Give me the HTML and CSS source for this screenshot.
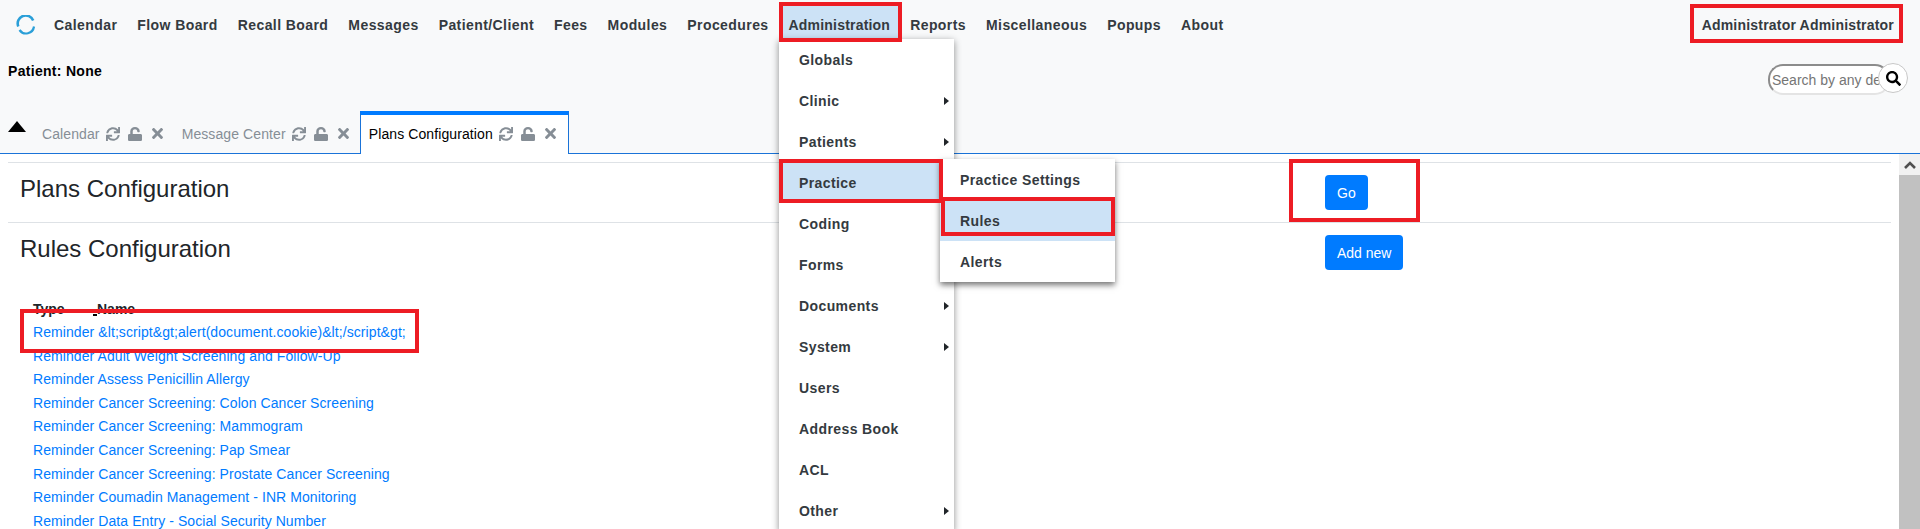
FILE: index.html
```html
<!DOCTYPE html>
<html lang="en">
<head>
  <meta charset="UTF-8">
  <meta name="viewport" content="width=device-width, initial-scale=1.0">
  <title>Plans Configuration</title>
  <link rel="stylesheet" href="styles.css">
</head>
<body>
  <svg class="icon-defs" aria-hidden="true">
    <symbol id="i-sync" viewBox="0 0 512 512"><path d="M440.65 12.57l4 82.77A247.16 247.16 0 0 0 255.83 8C134.73 8 33.91 94.92 12.29 209.82A12 12 0 0 0 24.09 224h49.05a12 12 0 0 0 11.67-9.26 175.91 175.91 0 0 1 317-56.94l-101.46-4.86a12 12 0 0 0-12.57 12v47.41a12 12 0 0 0 12 12H500a12 12 0 0 0 12-12V12a12 12 0 0 0-12-12h-47.37a12 12 0 0 0-11.98 12.57zM255.83 432a175.61 175.61 0 0 1-146-77.8l101.8 4.87a12 12 0 0 0 12.57-12v-47.4a12 12 0 0 0-12-12H12a12 12 0 0 0-12 12V500a12 12 0 0 0 12 12h47.35a12 12 0 0 0 12-12.6l-4.15-82.57A247.17 247.17 0 0 0 255.83 504c121.11 0 221.93-86.92 243.55-201.82a12 12 0 0 0-11.8-14.18h-49.05a12 12 0 0 0-11.67 9.26A175.86 175.86 0 0 1 255.83 432z"/></symbol>
    <symbol id="i-unlock" viewBox="0 0 448 512" preserveAspectRatio="none"><path d="M400 256H152V152.9c0-39.6 31.7-72.5 71.3-72.9 40-.4 72.7 32.1 72.7 72v16c0 13.3 10.7 24 24 24h32c13.3 0 24-10.7 24-24v-16C376 68 307.5-.3 223.5 0 139.5.3 72 69.5 72 153.5V256H48c-26.5 0-48 21.5-48 48v160c0 26.5 21.5 48 48 48h352c26.5 0 48-21.5 48-48V304c0-26.5-21.5-48-48-48z"/></symbol>
    <symbol id="i-times" viewBox="0 80 352 352"><path d="M242.72 256l100.07-100.07c12.28-12.28 12.28-32.19 0-44.48l-22.24-22.24c-12.28-12.28-32.19-12.28-44.48 0L176 189.28 75.93 89.21c-12.28-12.28-32.19-12.28-44.48 0L9.21 111.45c-12.28 12.28-12.28 32.19 0 44.48L109.28 256 9.21 356.07c-12.28 12.28-12.28 32.19 0 44.48l22.24 22.24c12.28 12.28 32.2 12.28 44.48 0L176 322.72l100.07 100.07c12.28 12.28 32.2 12.28 44.48 0l22.24-22.24c12.28-12.28 12.28-32.19 0-44.48L242.72 256z"/></symbol>
  </svg>

  <header class="topbar">
    <nav class="nav-row">
      <svg class="logo" viewBox="0 0 20 20" width="20" height="20">
        <path d="M2.3 11.5A8 8 0 0 1 17.2 5.5" fill="none" stroke="#2a9fd8" stroke-width="2.6"/>
        <path d="M18 11.5A8 8 0 0 1 3.5 15" fill="none" stroke="#2a9fd8" stroke-width="2.2"/>
      </svg>
      <a class="nav-item">Calendar</a>
      <a class="nav-item">Flow Board</a>
      <a class="nav-item">Recall Board</a>
      <a class="nav-item">Messages</a>
      <a class="nav-item">Patient/Client</a>
      <a class="nav-item">Fees</a>
      <a class="nav-item">Modules</a>
      <a class="nav-item">Procedures</a>
      <a class="nav-item active">Administration</a>
      <a class="nav-item">Reports</a>
      <a class="nav-item">Miscellaneous</a>
      <a class="nav-item">Popups</a>
      <a class="nav-item">About</a>
      <a class="nav-item nav-user">Administrator Administrator</a>
    </nav>

    <div class="patient-row">
      <div class="patient-name">Patient: None</div>
      <div class="search-box">
        <input class="search-input" type="text" placeholder="Search by any demographics">
        <button class="search-button" type="button">
          <svg viewBox="0 0 512 512" width="15" height="15"><path d="M505 442.7L405.3 343c-4.5-4.5-10.6-7-17-7H372c27.6-35.3 44-79.7 44-128C416 93.1 322.9 0 208 0S0 93.1 0 208s93.1 208 208 208c48.3 0 92.7-16.4 128-44v16.3c0 6.4 2.5 12.5 7 17l99.7 99.7c9.4 9.4 24.6 9.4 33.9 0l28.3-28.3c9.4-9.4 9.4-24.6.1-34zM208 336c-70.7 0-128-57.2-128-128 0-70.7 57.2-128 128-128 70.7 0 128 57.2 128 128 0 70.7-57.2 128-128 128z"/></svg>
        </button>
      </div>
    </div>

    <div class="tab-row">
      <span class="tab-toggle"></span>
      <div class="tab">
        <span>Calendar</span>
        <svg class="tab-icon sync"><use href="#i-sync"/></svg>
        <svg class="tab-icon lock"><use href="#i-unlock"/></svg>
        <svg class="tab-icon close"><use href="#i-times"/></svg>
      </div>
      <div class="tab">
        <span>Message Center</span>
        <svg class="tab-icon sync"><use href="#i-sync"/></svg>
        <svg class="tab-icon lock"><use href="#i-unlock"/></svg>
        <svg class="tab-icon close"><use href="#i-times"/></svg>
      </div>
      <div class="tab tab-active">
        <span>Plans Configuration</span>
        <svg class="tab-icon sync"><use href="#i-sync"/></svg>
        <svg class="tab-icon lock"><use href="#i-unlock"/></svg>
        <svg class="tab-icon close"><use href="#i-times"/></svg>
      </div>
    </div>
  </header>

  <main class="main-area">
    <div class="content">
      <section class="config-section">
        <div>
          <h2>Plans Configuration</h2>
        </div>
        <div><button class="btn" type="button">Go</button></div>
      </section>

      <section class="config-section">
        <div>
          <h2>Rules Configuration</h2>
          <div class="rules-head">
            <span class="col-type">Type</span>
            <span class="col-name">Name</span>
          </div>
          <ul class="rules-list">
            <li><a>Reminder &amp;lt;script&amp;gt;alert(document.cookie)&amp;lt;/script&amp;gt;</a></li>
            <li><a>Reminder Adult Weight Screening and Follow-Up</a></li>
            <li><a>Reminder Assess Penicillin Allergy</a></li>
            <li><a>Reminder Cancer Screening: Colon Cancer Screening</a></li>
            <li><a>Reminder Cancer Screening: Mammogram</a></li>
            <li><a>Reminder Cancer Screening: Pap Smear</a></li>
            <li><a>Reminder Cancer Screening: Prostate Cancer Screening</a></li>
            <li><a>Reminder Coumadin Management - INR Monitoring</a></li>
            <li><a>Reminder Data Entry - Social Security Number</a></li>
          </ul>
        </div>
        <div><button class="btn" type="button">Add new</button></div>
      </section>
    </div>

    <div class="scrollbar">
      <div class="scroll-arrow">
        <svg viewBox="0 0 12 8" width="12" height="8"><path d="M1 7l5-5 5 5" fill="none" stroke="#505050" stroke-width="2.6"/></svg>
      </div>
      <div class="scroll-thumb"></div>
    </div>
  </main>

  <!-- open dropdowns -->
  <ul class="menu menu-admin">
    <li>Globals</li>
    <li class="has-sub">Clinic</li>
    <li class="has-sub">Patients</li>
    <li class="selected">Practice</li>
    <li>Coding</li>
    <li>Forms</li>
    <li class="has-sub">Documents</li>
    <li class="has-sub">System</li>
    <li>Users</li>
    <li>Address Book</li>
    <li>ACL</li>
    <li class="has-sub">Other</li>
  </ul>
  <ul class="menu menu-practice">
    <li>Practice Settings</li>
    <li class="selected">Rules</li>
    <li>Alerts</li>
  </ul>

  <!-- red boxes drawn on the screenshot -->
  <div class="mark mark-admin"></div>
  <div class="mark mark-user"></div>
  <div class="mark mark-practice"></div>
  <div class="mark mark-rules"></div>
  <div class="mark mark-go"></div>
  <div class="mark mark-link"></div>
</body>
</html>
```

FILE: styles.css
```css
* {
  box-sizing: border-box;
}

html, body {
  height: 529px;
  overflow: hidden;
}

body {
  position: relative;
  margin: 0;
  font-family: "Liberation Sans", Arial, sans-serif;
  font-size: 14px;
  color: #212529;
  background-color: #fff;
}

.icon-defs {
  display: none;
}

/* Top area */
.topbar {
  display: flex;
  flex-direction: column;
  height: 154px;
  background-color: #f8f9fa;
  border-bottom: 1px solid #1a73d8;
}

.nav-row {
  display: flex;
  align-items: center;
  height: 40px;
  margin-top: 5px;
  padding: 0 16px;
}

.logo {
  margin-right: 8px;
}

.nav-item {
  padding: 0 10px;
  line-height: 40px;
  font-weight: bold;
  letter-spacing: 0.42px;
  color: #343a40;
  white-space: nowrap;
}

.nav-item.active {
  letter-spacing: 0.2px;
  background-color: #cce2f6;
}

.nav-user {
  margin-left: auto;
  letter-spacing: 0.2px;
}

.patient-row {
  display: flex;
  justify-content: space-between;
  margin-top: 15px;
  padding: 0 30px 0 8px;
}

.patient-name {
  line-height: 22px;
  font-weight: bold;
  letter-spacing: 0.3px;
  color: #000;
}

.search-box {
  position: relative;
  margin-top: 4px;
}

.search-input {
  display: block;
  width: 122px;
  height: 31px;
  padding: 0 2px;
  font-family: inherit;
  font-size: 14px;
  background-color: #fff;
  border: 2px solid;
  border-color: #8c8c8c #e4e4e4 #e4e4e4 #8c8c8c;
  border-radius: 15px;
}

.search-button {
  position: absolute;
  top: -1px;
  left: 110px;
  display: flex;
  align-items: center;
  justify-content: center;
  width: 30px;
  height: 30px;
  padding: 0;
  background-color: #fff;
  border: 1px solid #c8c8c8;
  border-radius: 50%;
}

.tab-row {
  display: flex;
  align-items: flex-end;
  margin-top: auto;
  margin-bottom: -1px;
  padding-left: 8px;
}

.tab-toggle {
  width: 0;
  height: 0;
  margin: 0 6px 22px 0;
  border-left: 9.5px solid transparent;
  border-right: 9.5px solid transparent;
  border-bottom: 11px solid #000;
}

.tab {
  display: flex;
  align-items: center;
  height: 43px;
  padding: 0 9px 2px 10px;
  color: #868e96;
  letter-spacing: 0.1px;
  border-top: 4px solid transparent;
}

.tab-active {
  margin-left: 2px;
  padding: 0 12px 2px 8px;
  color: #000;
  background-color: #fff;
  border: 1px solid #1a73d8;
  border-top: 4px solid #007bff;
  border-bottom: 0;
}

.tab-icon {
  fill: #868e96;
  width: 14px;
  height: 14px;
}

.tab-icon.sync {
  margin-left: 6px;
}

.tab-icon.lock {
  margin-left: 8px;
}

.tab-icon.close {
  width: 11px;
  height: 11px;
  margin-left: 10px;
}

/* Page body */
.main-area {
  display: flex;
  height: 375px;
  overflow: hidden;
}

.content {
  flex: 1;
  padding: 8px 8px 0;
}

.config-section {
  display: grid;
  grid-template-columns: 1305px auto;
  padding: 12px 0 12px 12px;
  border-top: 1px solid #dee2e6;
}

h2 {
  margin: -1px 0 0;
  font-size: 24px;
  font-weight: 400;
  line-height: 29px;
  color: #212529;
}

.btn {
  display: block;
  height: 35px;
  padding: 0 12px;
  font-family: inherit;
  font-size: 14px;
  color: #fff;
  background-color: #007bff;
  border: 0;
  border-radius: 4px;
}

.rules-head {
  display: flex;
  margin: 35px 0 0 13px;
  line-height: 22px;
  font-weight: bold;
  color: #212529;
}

.col-type {
  width: 64px;
}

.col-name {
  position: relative;
}

/* stray mark left under the header in the original */
.col-name::before {
  content: "";
  position: absolute;
  left: -4px;
  top: 16px;
  width: 4px;
  height: 2px;
  background-color: #000;
}

.rules-list {
  margin: 1px 0 0 13px;
  padding: 0;
  list-style: none;
}

.rules-list li {
  line-height: 23.6px;
  letter-spacing: 0.08px;
}

.rules-list a {
  color: #007bff;
}

.scrollbar {
  display: flex;
  flex-direction: column;
  width: 21px;
  background-color: #f1f1f1;
}

.scroll-arrow {
  display: flex;
  align-items: center;
  justify-content: center;
  height: 21px;
}

.scroll-thumb {
  flex: 1;
  background-color: #c1c1c1;
}

/* Dropdowns */
.menu {
  position: absolute;
  margin: 0;
  padding: 0;
  list-style: none;
  background-color: #fff;
  box-shadow: 0 2px 7px rgba(0, 0, 0, 0.45);
}

.menu-admin {
  left: 779px;
  top: 39px;
  width: 175px;
}

.menu-practice {
  left: 940px;
  top: 159px;
  width: 175px;
  box-shadow: 0 3px 6px rgba(0, 0, 0, 0.55);
}

.menu li {
  position: relative;
  height: 41px;
  padding-left: 20px;
  line-height: 43px;
  font-weight: bold;
  letter-spacing: 0.4px;
  color: #343a40;
}

.menu li.selected {
  background-color: #cce2f6;
}

.has-sub::after {
  content: "";
  position: absolute;
  right: 5px;
  top: 17px;
  border-top: 4px solid transparent;
  border-bottom: 4px solid transparent;
  border-left: 5px solid #212529;
}

/* Annotation boxes */
.mark {
  position: absolute;
  border: 4px solid #ed1c24;
}

.mark-admin {
  left: 779px;
  top: 2px;
  width: 123px;
  height: 40px;
}

.mark-user {
  left: 1690px;
  top: 4px;
  width: 213px;
  height: 39px;
}

.mark-practice {
  left: 779px;
  top: 159px;
  width: 164px;
  height: 44px;
}

.mark-rules {
  left: 941px;
  top: 197px;
  width: 174px;
  height: 39px;
}

.mark-go {
  left: 1289px;
  top: 159px;
  width: 131px;
  height: 63px;
}

.mark-link {
  left: 20px;
  top: 309px;
  width: 399px;
  height: 44px;
}
```
